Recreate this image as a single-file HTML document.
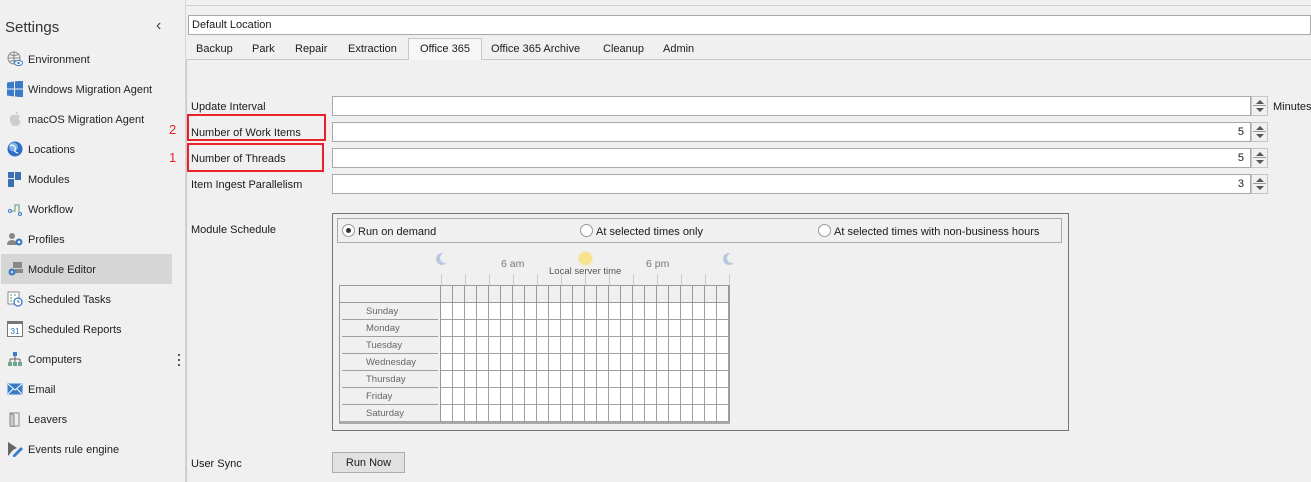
<!DOCTYPE html>
<html><head><meta charset="utf-8"><style>
*{box-sizing:border-box;margin:0;padding:0}
body{width:1311px;height:482px;background:#f0f0f0;font-family:"Liberation Sans",sans-serif;font-size:11px;color:#1a1a1a;position:relative;overflow:hidden}
.a{position:absolute}
.side{left:0;top:0;width:186px;height:482px;border-right:1px solid #d6d6d6;background:#f0f0f0}
.it{position:absolute;left:28px;font-size:11px;color:#222;margin-top:1px}
.ic{position:absolute;left:7px;width:16px;height:16px}
.inp{position:absolute;left:332px;width:919px;height:20px;background:#fff;border:1px solid #a9a9a9;text-align:right;padding-right:6px;line-height:19px;font-size:11px}
.sp{position:absolute;left:1251px;width:17px;height:20px;background:#f0f0f0;border:1px solid #c4c4c4}
.sp:before{content:"";position:absolute;left:4px;top:3px;border:4px solid transparent;border-bottom:4px solid #555;border-top:0}
.sp:after{content:"";position:absolute;left:4px;top:11px;border:4px solid transparent;border-top:4px solid #555;border-bottom:0}
.sp i{position:absolute;left:1px;right:1px;top:8px;height:1px;background:#999}
.lbl{position:absolute;left:191px;font-size:11px;margin-top:1px}
.tab{position:absolute;top:40px;height:20px;line-height:19px;font-size:11px}
.day{position:absolute;left:342px;width:96px;height:17px;border-bottom:1px solid #a0a0a0;color:#666;font-size:9.5px;line-height:18px;padding-left:24px}
.rad{position:absolute;width:13px;height:13px;border-radius:50%;border:1px solid #999;background:#fff}
</style></head><body>
<div class="a" style="left:0;top:5px;width:1311px;height:1px;background:#d0d0d0"></div>
<div class="a side">
<div class="a" style="left:5px;top:19px;font-size:15px;color:#333">Settings</div>
<div class="a" style="left:156px;top:17px;font-size:16px;color:#444">&#8249;</div>
<div class="a" style="left:1px;top:254px;width:171px;height:30px;background:#d6d6d6"></div>
<svg class="ic" style="top:51px" viewBox="0 0 16 16"><circle cx="7" cy="7" r="6" fill="none" stroke="#888"/><path d="M1 7h12M7 1v12M3 3.5q4 2 8 0M3 10.5q4-2 8 0" fill="none" stroke="#888"/><ellipse cx="11.5" cy="12" rx="4" ry="2.5" fill="#fff" stroke="#3a7bc8"/><circle cx="11.5" cy="12" r="1.2" fill="#3a7bc8"/></svg>
<span class="it" style="top:53px">Environment</span>
<svg class="ic" style="top:81px" viewBox="0 0 16 16"><path d="M0 1.5l7-1v7H0zM8 0.4L16 -.5V7.5H8zM0 8.5h7v7L0 14.5zM8 8.5h8v8l-8-1z" fill="#3a7bc8"/></svg>
<span class="it" style="top:83px">Windows Migration Agent</span>
<svg class="ic" style="top:111px" viewBox="0 0 16 16"><path d="M8 4.5C6 3.5 3 4 3 8c0 4 2.5 7 4 7 .6 0 1-.4 1.5-.4s1 .4 1.6.4c1.5 0 3.5-3.5 3.5-4.5-1.5-.6-2-2-2-3 0-1 .6-2 1.5-2.5C12 4 10 3.8 8 4.5zM8.5 3.5C8.5 2 9.5 1 11 .8 11 2.5 10 3.5 8.5 3.5z" fill="#ccc"/></svg>
<span class="it" style="top:113px">macOS Migration Agent</span>
<svg class="ic" style="top:141px" viewBox="0 0 16 16"><circle cx="8" cy="8" r="7.5" fill="#2f6fc4"/><circle cx="6.5" cy="6" r="4.5" fill="#7fb0e8"/><path d="M3 5q2-2 4 0t1 4 3 3" fill="none" stroke="#fff" stroke-width="1.2"/></svg>
<span class="it" style="top:143px">Locations</span>
<svg class="ic" style="top:171px" viewBox="0 0 16 16"><rect x="1" y="1" width="6" height="6" fill="#3a6fb0"/><rect x="8" y="1" width="6" height="8" fill="#3a6fb0"/><rect x="1" y="8" width="6" height="8" fill="#3a6fb0"/></svg>
<span class="it" style="top:173px">Modules</span>
<svg class="ic" style="top:201px" viewBox="0 0 16 16"><circle cx="3" cy="10" r="1.5" fill="none" stroke="#3a7bc8"/><circle cx="13" cy="13" r="1.5" fill="none" stroke="#3a7bc8"/><path d="M4.5 10H8V4h4v8" fill="none" stroke="#5a9a6a"/></svg>
<span class="it" style="top:203px">Workflow</span>
<svg class="ic" style="top:231px" viewBox="0 0 16 16"><circle cx="5" cy="5" r="3" fill="#888"/><path d="M0 14q0-5 5-5t5 5z" fill="#888"/><circle cx="12" cy="11" r="3.5" fill="#3a7bc8"/><circle cx="12" cy="11" r="1.3" fill="#fff"/></svg>
<span class="it" style="top:233px">Profiles</span>
<svg class="ic" style="top:261px" viewBox="0 0 16 16"><rect x="6" y="1" width="9" height="6" fill="#888"/><rect x="8" y="8" width="8" height="4" fill="#888"/><circle cx="5" cy="11" r="3.5" fill="#3a7bc8"/><circle cx="5" cy="11" r="1.3" fill="#d6d6d6"/></svg>
<span class="it" style="top:263px">Module Editor</span>
<svg class="ic" style="top:291px" viewBox="0 0 16 16"><rect x="1" y="1" width="11" height="12" fill="#fff" stroke="#888"/><path d="M3 4h2M3 7h2M3 10h2M7 4h2" stroke="#5a9a6a"/><circle cx="11" cy="11" r="4" fill="#fff" stroke="#3a7bc8" stroke-width="1.3"/><path d="M11 9v2h1.5" stroke="#3a7bc8" fill="none"/></svg>
<span class="it" style="top:293px">Scheduled Tasks</span>
<svg class="ic" style="top:321px" viewBox="0 0 16 16"><rect x=".5" y=".5" width="15" height="15" fill="#fff" stroke="#777"/><rect x=".5" y=".5" width="15" height="2.5" fill="#777"/><text x="8" y="13" font-size="8" text-anchor="middle" fill="#2f6fc4" font-family="Liberation Sans">31</text></svg>
<span class="it" style="top:323px">Scheduled Reports</span>
<svg class="ic" style="top:351px" viewBox="0 0 16 16"><rect x="6" y="1" width="4" height="4" fill="#3a7bc8"/><path d="M8 5v3M3 8h10M3 8v3M8 8v3M13 8v3" stroke="#666"/><rect x="1" y="11" width="4" height="4" fill="#6aa88a"/><rect x="6" y="11" width="4" height="4" fill="#6aa88a"/><rect x="11" y="11" width="4" height="4" fill="#6aa88a"/></svg>
<span class="it" style="top:353px">Computers</span>
<div class="a" style="left:178px;top:354px;width:2px;height:14px;background:repeating-linear-gradient(#555 0 2px,transparent 2px 5px)"></div>
<svg class="ic" style="top:381px" viewBox="0 0 16 16"><rect x=".5" y="2.5" width="15" height="11" fill="#3a7bc8"/><path d="M1 3l7 6 7-6M1 13l5-5M15 13l-5-5" stroke="#fff" fill="none"/></svg>
<span class="it" style="top:383px">Email</span>
<svg class="ic" style="top:411px" viewBox="0 0 16 16"><path d="M3 2h9v13H3z" fill="#eee" stroke="#888"/><path d="M3 2l4 2v12l-4-1z" fill="#ccc" stroke="#888"/></svg>
<span class="it" style="top:413px">Leavers</span>
<svg class="ic" style="top:441px" viewBox="0 0 16 16"><path d="M1 1l9 6-4 2-5 6z" fill="#666"/><path d="M6 14l8-8 2 2-8 8H6z" fill="#3a7bc8"/></svg>
<span class="it" style="top:443px">Events rule engine</span>
</div>

<div class="a" style="left:188px;top:15px;width:1123px;height:20px;background:#fff;border:1px solid #a9a9a9;padding-left:3px;line-height:19px;font-size:11px">Default Location</div>
<div class="a" style="left:186px;top:59px;width:1125px;height:1px;background:#c8c8c8"></div>
<div class="a" style="left:186px;top:59px;width:1px;height:423px;background:#c8c8c8"></div>
<div class="a" style="left:408px;top:38px;width:74px;height:22px;background:#f7f7f7;border:1px solid #c8c8c8;border-bottom:none"></div>
<span class="tab" style="left:196px">Backup</span>
<span class="tab" style="left:252px">Park</span>
<span class="tab" style="left:295px">Repair</span>
<span class="tab" style="left:348px">Extraction</span>
<span class="tab" style="left:420px">Office 365</span>
<span class="tab" style="left:491px">Office 365 Archive</span>
<span class="tab" style="left:603px">Cleanup</span>
<span class="tab" style="left:663px">Admin</span>

<span class="lbl" style="top:100px">Update Interval</span>
<span class="lbl" style="top:126px">Number of Work Items</span>
<span class="lbl" style="top:152px">Number of Threads</span>
<span class="lbl" style="top:178px">Item Ingest Parallelism</span>
<div class="a" style="left:187px;top:114px;width:139px;height:27px;border:2px solid #e8212b"></div>
<div class="a" style="left:187px;top:143px;width:137px;height:29px;border:2px solid #e8212b"></div>
<span class="a" style="left:169px;top:122px;color:#e8212b;font-size:13px">2</span>
<span class="a" style="left:169px;top:150px;color:#e8212b;font-size:13px">1</span>

<div class="inp" style="top:96px">&#8203;</div><div class="sp" style="top:96px"><i></i></div>
<div class="inp" style="top:122px">5</div><div class="sp" style="top:122px"><i></i></div>
<div class="inp" style="top:148px">5</div><div class="sp" style="top:148px"><i></i></div>
<div class="inp" style="top:174px">3</div><div class="sp" style="top:174px"><i></i></div>
<span class="a" style="left:1273px;top:101px">Minutes</span>

<span class="lbl" style="top:223px">Module Schedule</span>
<div class="a" style="left:332px;top:213px;width:737px;height:218px;border:1px solid #777"></div>
<div class="a" style="left:337px;top:218px;width:725px;height:25px;border:1px solid #aaa"></div>
<div class="rad" style="left:342px;top:224px"></div><div class="a" style="left:346px;top:228px;width:5px;height:5px;border-radius:50%;background:#333"></div>
<span class="a" style="left:358px;top:226px">Run on demand</span>
<div class="rad" style="left:580px;top:224px"></div><span class="a" style="left:596px;top:226px">At selected times only</span>
<div class="rad" style="left:818px;top:224px"></div><span class="a" style="left:834px;top:226px">At selected times with non-business hours</span>

<div class="a" style="left:436px;top:253px;width:12px;height:12px;border-radius:50%;background:#b8c8e0"></div><div class="a" style="left:440px;top:253px;width:10px;height:10px;border-radius:50%;background:#f0f0f0"></div>
<div class="a" style="left:723px;top:253px;width:12px;height:12px;border-radius:50%;background:#b8c8e0"></div><div class="a" style="left:727px;top:253px;width:10px;height:10px;border-radius:50%;background:#f0f0f0"></div>
<div class="a" style="left:580px;top:253px;width:11px;height:11px;border-radius:50%;background:#f7e38a;box-shadow:0 0 2px 1px #f5d870"></div>
<span class="a" style="left:501px;top:258px;color:#777;font-size:10.5px">6 am</span>
<span class="a" style="left:646px;top:258px;color:#777;font-size:10.5px">6 pm</span>
<span class="a" style="left:549px;top:266px;color:#555;font-size:9.5px">Local server time</span>
<div class="a" style="left:441px;top:274px;width:289px;height:12px;background:repeating-linear-gradient(to right,#ccc 0 1px,transparent 1px 24px)"></div>

<div class="a" style="left:339px;top:285px;width:391px;height:139px;background:#f0f0f0;border:1px solid #999;border-bottom:3px solid #aaa"></div>
<div class="a" style="left:440px;top:286px;width:289px;height:16px;border-left:1px solid #999;background:repeating-linear-gradient(to right,transparent 0 11px,#999 11px 12px)"></div>
<div class="a" style="left:340px;top:302px;width:389px;height:1px;background:#999"></div>
<div class="a" style="left:441px;top:303px;width:288px;height:119px;background:repeating-linear-gradient(to bottom,transparent 0 16px,#a0a0a0 16px 17px),repeating-linear-gradient(to right,#fff 0 11px,#a0a0a0 11px 12px)"></div>
<div class="a" style="left:440px;top:302px;width:1px;height:120px;background:#999"></div>
<div class="day" style="top:303px">Sunday</div>
<div class="day" style="top:320px">Monday</div>
<div class="day" style="top:337px">Tuesday</div>
<div class="day" style="top:354px">Wednesday</div>
<div class="day" style="top:371px">Thursday</div>
<div class="day" style="top:388px">Friday</div>
<div class="day" style="top:405px;border-bottom:none">Saturday</div>

<span class="lbl" style="top:457px">User Sync</span>
<div class="a" style="left:332px;top:452px;width:73px;height:21px;background:#e1e1e1;border:1px solid #adadad;text-align:center;line-height:20px">Run Now</div>
</body></html>
